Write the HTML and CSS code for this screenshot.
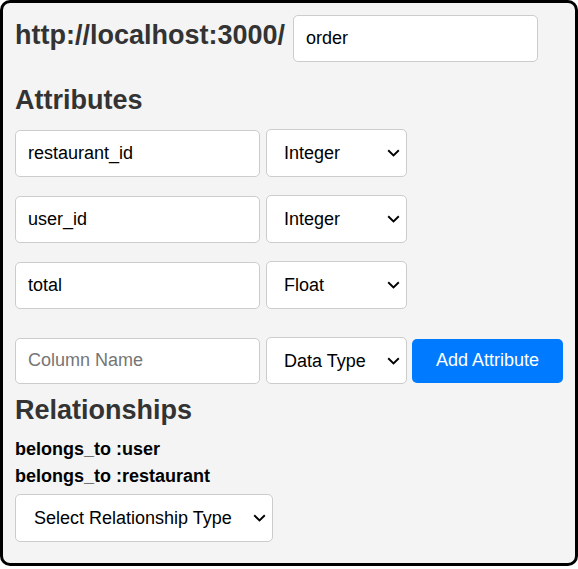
FILE: index.html
```html
<!DOCTYPE html>
<html lang="en">
<head>
<meta charset="utf-8">
<title>Model editor</title>
<link rel="stylesheet" href="styles.css">
</head>
<body>
<div class="card">
  <div class="header">
    <h2 class="title">http://localhost:3000/</h2>
    <input class="field model-field" type="text" value="order">
  </div>

  <h2 class="section">Attributes</h2>
  <div class="attr-list">
    <div class="row">
      <input class="field col-field" type="text" value="restaurant_id">
      <span class="select-wrap type-wrap">
        <select class="select"><option>Integer</option></select>
        <svg class="chev" width="13" height="8" viewBox="0 0 13 8"><path d="M1.2 1.3 L6.5 6.4 L11.8 1.3" fill="none" stroke="#000" stroke-width="1.9"/></svg>
      </span>
    </div>
    <div class="row">
      <input class="field col-field" type="text" value="user_id">
      <span class="select-wrap type-wrap">
        <select class="select"><option>Integer</option></select>
        <svg class="chev" width="13" height="8" viewBox="0 0 13 8"><path d="M1.2 1.3 L6.5 6.4 L11.8 1.3" fill="none" stroke="#000" stroke-width="1.9"/></svg>
      </span>
    </div>
    <div class="row">
      <input class="field col-field" type="text" value="total">
      <span class="select-wrap type-wrap">
        <select class="select"><option>Float</option></select>
        <svg class="chev" width="13" height="8" viewBox="0 0 13 8"><path d="M1.2 1.3 L6.5 6.4 L11.8 1.3" fill="none" stroke="#000" stroke-width="1.9"/></svg>
      </span>
    </div>
  </div>

  <div class="row new-row">
    <input class="field col-field" type="text" placeholder="Column Name">
    <span class="select-wrap type-wrap">
      <select class="select"><option>Data Type</option></select>
      <svg class="chev" width="13" height="8" viewBox="0 0 13 8"><path d="M1.2 1.3 L6.5 6.4 L11.8 1.3" fill="none" stroke="#000" stroke-width="1.9"/></svg>
    </span>
    <button class="btn" type="button">Add Attribute</button>
  </div>

  <h2 class="section rel-title">Relationships</h2>
  <div class="rel-list">
    <div class="rel">belongs_to :user</div>
    <div class="rel">belongs_to :restaurant</div>
  </div>
  <span class="select-wrap rel-wrap">
    <select class="select"><option>Select Relationship Type</option></select>
    <svg class="chev" width="13" height="8" viewBox="0 0 13 8"><path d="M1.2 1.3 L6.5 6.4 L11.8 1.3" fill="none" stroke="#000" stroke-width="1.9"/></svg>
  </span>
</div>
</body>
</html>
```

FILE: styles.css
```css
* { box-sizing: border-box; }

html, body {
  margin: 0;
  background: #ffffff;
}

body {
  font-family: "Liberation Sans", Arial, sans-serif;
  font-size: 18px;
  color: #000;
}

.card {
  width: 578px;
  height: 566px;
  border: 3px solid #000;
  border-radius: 10px;
  background: #f4f4f4;
  padding: 12px;
}

.header {
  display: flex;
  align-items: baseline;
  gap: 8px;
}

.title,
.section {
  margin: 0;
  font-size: 27px;
  font-weight: bold;
  line-height: normal;
  color: #333;
}

.section {
  margin-top: 23px;
}

.field {
  display: block;
  height: 47px;
  border: 1px solid #ccc;
  border-radius: 5px;
  background: #fff;
  padding: 0 12px;
  font-family: inherit;
  font-size: 18px;
  color: #000;
  outline: none;
}

.field::placeholder {
  color: #757575;
}

.model-field {
  width: 245px;
}

.col-field {
  width: 245px;
}

.attr-list {
  margin-top: 13px;
  display: flex;
  flex-direction: column;
  gap: 18px;
}

.row {
  display: flex;
  align-items: center;
  height: 48px;
}

.row .select-wrap {
  margin-left: 6px;
}

.select-wrap {
  position: relative;
  display: block;
}

.select {
  display: block;
  width: 100%;
  height: 48px;
  appearance: none;
  -webkit-appearance: none;
  border: 1px solid #ccc;
  border-radius: 5px;
  background: #fff;
  padding: 0 30px 0 17px;
  font-family: inherit;
  font-size: 18px;
  color: #000;
  outline: none;
}

.chev {
  position: absolute;
  right: 7px;
  top: 50%;
  margin-top: -4px;
  pointer-events: none;
}

.type-wrap {
  width: 141px;
}

.new-row {
  margin-top: 28px;
  height: 47px;
}

.new-row .col-field {
  height: 46px;
}

.new-row .select {
  height: 47px;
}

.btn {
  margin-left: 5px;
  width: 151px;
  height: 44px;
  border: none;
  border-radius: 5px;
  background: #007bff;
  color: #fff;
  font-family: inherit;
  font-size: 18px;
  padding: 0;
}

.rel-title {
  margin-top: 11px;
}

.rel-list {
  margin-top: 10px;
}

.rel {
  font-weight: bold;
  line-height: 27px;
}

.rel-wrap {
  margin-top: 4px;
  width: 258px;
}

.rel-wrap .select {
  padding-left: 18px;
}
```
